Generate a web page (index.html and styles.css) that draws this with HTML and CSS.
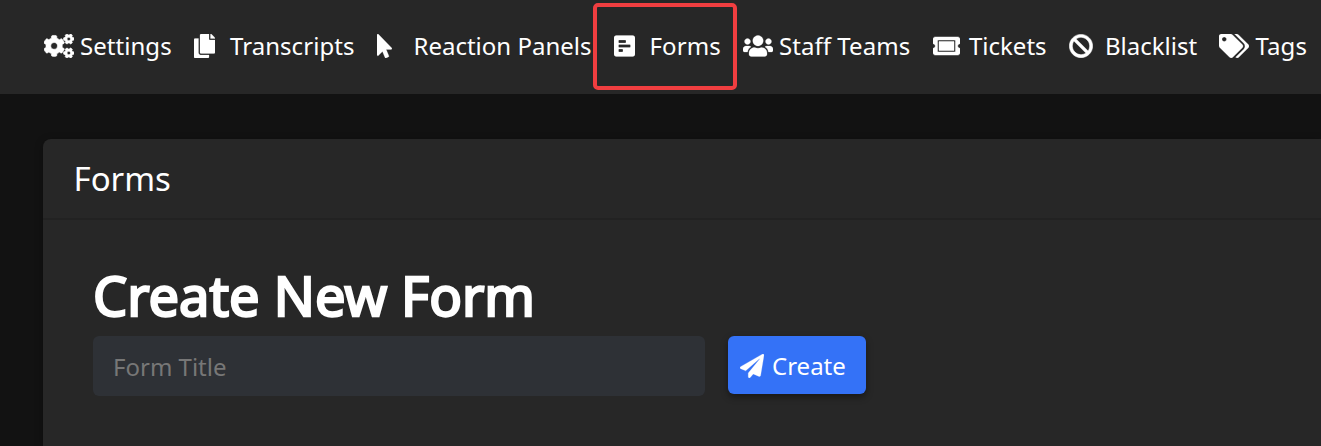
FILE: index.html
```html
<!DOCTYPE html>
<html lang="en">
<head>
<meta charset="utf-8">
<title>Forms</title>
<link rel="stylesheet" href="styles.css">
</head>
<body>
<nav class="navbar">
  <a class="nav-item settings"><svg class="icon" viewBox="0 0 640 512"><defs><path id="cog" d="M512.1 191l-8.2 14.3c-3 5.3-9.4 7.5-15.1 5.4-11.8-4.4-22.6-10.7-32.1-18.6-4.6-3.8-5.8-10.5-2.8-15.7l8.2-14.3c-6.9-8-12.3-17.3-15.9-27.4h-16.5c-6 0-11.2-4.3-12.2-10.3-2-12-2.1-24.6 0-37.1 1-6 6.2-10.4 12.2-10.4h16.5c3.6-10.1 9-19.4 15.9-27.4l-8.2-14.3c-3-5.2-1.9-11.9 2.8-15.7 9.5-7.9 20.4-14.2 32.1-18.6 5.7-2.1 12.1.1 15.1 5.4l8.2 14.3c10.5-1.9 21.2-1.9 31.7 0L552 6.3c3-5.3 9.4-7.5 15.1-5.4 11.8 4.4 22.6 10.7 32.1 18.6 4.6 3.8 5.8 10.5 2.8 15.7l-8.2 14.3c6.9 8 12.3 17.3 15.9 27.4h16.5c6 0 11.2 4.3 12.2 10.3 2 12 2.1 24.6 0 37.1-1 6-6.2 10.4-12.2 10.4h-16.5c-3.6 10.1-9 19.4-15.9 27.4l8.2 14.3c3 5.2 1.9 11.9-2.8 15.7-9.5 7.9-20.4 14.2-32.1 18.6-5.7 2.1-12.1-.1-15.1-5.4l-8.2-14.3c-10.4 1.9-21.2 1.9-31.7 0zm-10.5-58.8c38.5 29.6 82.4-14.3 52.8-52.8-38.5-29.7-82.4 14.3-52.8 52.8z"/></defs><use href="#cog"/><use href="#cog" transform="translate(0 300)"/><path d="M386.3 286.1l33.7 16.8c10.1 5.8 14.5 18.1 10.5 29.1-8.9 24.2-26.4 46.4-42.6 65.8-7.4 8.9-20.2 11.1-30.3 5.3l-29.1-16.8c-16 13.7-34.6 24.6-54.9 31.7v33.6c0 11.6-8.3 21.6-19.7 23.6-24.6 4.2-50.4 4.4-75.9 0-11.5-2-20-11.9-20-23.6V418c-20.3-7.2-38.9-18-54.9-31.7L74 403c-10 5.8-22.9 3.6-30.3-5.3-16.2-19.4-33.3-41.6-42.2-65.7-4-10.9.4-23.2 10.5-29.1l33.3-16.8c-3.9-20.9-3.9-42.4 0-63.4L12 205.8c-10.1-5.8-14.6-18.1-10.5-29 8.9-24.2 26-46.4 42.2-65.8 7.4-8.9 20.2-11.1 30.3-5.3l29.1 16.8c16-13.7 34.6-24.6 54.9-31.7V57.1c0-11.5 8.2-21.5 19.6-23.5 24.6-4.2 50.5-4.4 76-.1 11.5 2 20 11.9 20 23.6v33.6c20.3 7.2 38.9 18 54.9 31.7l29.1-16.8c10-5.8 22.9-3.6 30.3 5.3 16.2 19.4 33.2 41.6 42.1 65.8 4 10.9.1 23.2-10 29.1l-33.7 16.8c3.9 21 3.9 42.5 0 63.5zm-117.6 21.1c59.2-77-28.7-164.9-105.7-105.7-59.2 77 28.7 164.9 105.7 105.7z"/></svg><span>Settings</span></a>
  <a class="nav-item transcripts"><svg class="icon" viewBox="0 0 448 512"><path d="M320 448v40c0 13.255-10.745 24-24 24H24c-13.255 0-24-10.745-24-24V120c0-13.255 10.745-24 24-24h72v296c0 30.879 25.121 56 56 56h168zm0-344V0H152c-13.255 0-24 10.745-24 24v368c0 13.255 10.745 24 24 24h272c13.255 0 24-10.745 24-24V128H344c-13.2 0-24-10.8-24-24zm120.971-31.029L375.029 7.029A24 24 0 0 0 358.059 0H352v96h96v-6.059a24 24 0 0 0-7.029-16.97z"/></svg><span>Transcripts</span></a>
  <a class="nav-item panels"><svg class="icon" viewBox="0 0 320 512"><path d="M302.189 329.126H196.105l55.831 135.993c3.889 9.428-.555 19.999-9.444 23.999l-49.165 21.427c-9.165 4-19.443-.571-23.332-9.714l-53.053-129.136-86.664 89.138C18.729 472.71 0 463.554 0 447.977V18.299C0 1.899 19.921-6.096 30.277 5.443l284.412 292.542c11.472 11.179 3.007 31.141-12.5 31.141z"/></svg><span>Reaction Panels</span></a>
  <a class="nav-item forms active"><svg class="icon" viewBox="0 0 448 512"><path d="M448 432V80c0-26.5-21.5-48-48-48H48C21.5 32 0 53.5 0 80v352c0 26.5 21.5 48 48 48h352c26.5 0 48-21.5 48-48zM112 192c-8.84 0-16-7.16-16-16v-32c0-8.84 7.16-16 16-16h128c8.84 0 16 7.16 16 16v32c0 8.84-7.16 16-16 16H112zm0 96c-8.84 0-16-7.16-16-16v-32c0-8.84 7.16-16 16-16h224c8.84 0 16 7.16 16 16v32c0 8.84-7.16 16-16 16H112zm0 96c-8.84 0-16-7.16-16-16v-32c0-8.84 7.16-16 16-16h64c8.84 0 16 7.16 16 16v32c0 8.84-7.16 16-16 16h-64z"/></svg><span>Forms</span></a>
  <a class="nav-item teams"><svg class="icon" viewBox="0 0 640 512"><path d="M96 224c35.3 0 64-28.7 64-64s-28.7-64-64-64-64 28.7-64 64 28.7 64 64 64zm448 0c35.3 0 64-28.7 64-64s-28.7-64-64-64-64 28.7-64 64 28.7 64 64 64zm32 32h-64c-17.6 0-33.5 7.1-45.1 18.6 40.3 22.1 68.9 62 75.1 109.4h66c17.7 0 32-14.3 32-32v-32c0-35.3-28.7-64-64-64zm-256 0c61.9 0 112-50.1 112-112S381.9 32 320 32 208 82.1 208 144s50.1 112 112 112zm76.8 32h-8.3c-20.8 10-43.9 16-68.5 16s-47.6-6-68.5-16h-8.3C179.6 288 128 339.6 128 403.2V432c0 26.5 21.5 48 48 48h288c26.5 0 48-21.5 48-48v-28.8c0-63.6-51.6-115.2-115.2-115.2zm-223.7-13.4C161.5 263.1 145.6 256 128 256H64c-35.3 0-64 28.7-64 64v32c0 17.7 14.3 32 32 32h65.9c6.3-47.4 34.9-87.3 75.2-109.4z"/></svg><span>Staff Teams</span></a>
  <a class="nav-item tickets"><svg class="icon" viewBox="0 0 576 512"><path d="M128 160h320v192H128V160zm400 96c0 26.51 21.49 48 48 48v96c0 26.51-21.49 48-48 48H48c-26.51 0-48-21.49-48-48v-96c26.51 0 48-21.49 48-48s-21.49-48-48-48v-96c0-26.51 21.49-48 48-48h480c26.51 0 48 21.49 48 48v96c-26.51 0-48 21.49-48 48zm-48-104c0-13.255-10.745-24-24-24H120c-13.255 0-24 10.745-24 24v208c0 13.255 10.745 24 24 24h336c13.255 0 24-10.745 24-24V152z"/></svg><span>Tickets</span></a>
  <a class="nav-item blacklist"><svg class="icon" viewBox="0 0 512 512"><path d="M256 8C119.034 8 8 119.033 8 256s111.034 248 248 248 248-111.034 248-248S392.967 8 256 8zm130.108 117.892c65.448 65.448 70 165.481 20.677 235.637L150.47 105.216c70.204-49.356 170.226-44.735 235.638 20.676zM125.892 386.108c-65.448-65.448-70-165.481-20.677-235.637L361.53 406.784c-70.203 49.356-170.226 44.736-235.638-20.676z"/></svg><span>Blacklist</span></a>
  <a class="nav-item tags"><svg class="icon" viewBox="0 0 640 512"><path d="M497.941 225.941L286.059 14.059A48 48 0 0 0 252.118 0H48C21.49 0 0 21.49 0 48v204.118a48 48 0 0 0 14.059 33.941l211.882 211.882c18.744 18.745 49.136 18.746 67.882 0l204.118-204.118c18.745-18.745 18.745-49.137 0-67.882zM112 160c-26.51 0-48-21.49-48-48s21.49-48 48-48 48 21.49 48 48-21.49 48-48 48zm513.941 133.823L421.823 497.941c-18.745 18.745-49.137 18.745-67.882 0l-.36-.36L527.64 323.522c16.999-16.999 26.36-39.6 26.36-63.64s-9.362-46.641-26.36-63.64L331.397 0h48.721a48 48 0 0 1 33.941 14.059l211.882 211.882c18.745 18.745 18.745 49.137 0 67.882z"/></svg><span>Tags</span></a>
</nav>
<main class="content">
  <section class="card">
    <header class="card-header"><h4 class="card-title">Forms</h4></header>
    <div class="card-body">
      <h2 class="heading">Create New Form</h2>
      <form class="form-row">
        <input class="field" type="text" placeholder="Form Title">
        <button class="create" type="button"><svg class="icon" viewBox="0 0 512 512"><path d="M476 3.2L12.5 270.6c-18.1 10.4-15.8 35.6 2.2 43.2L121 358.4l287.3-253.2c5.5-4.9 13.3 2.6 8.6 8.3L176 407v80.5c0 23.6 28.5 32.9 42.5 15.8L282 426l124.6 52.2c14.2 6 30.4-2.9 33-18.2l72-432C515 7.8 493.3-6.8 476 3.2z"/></svg><span>Create</span></button>
      </form>
    </div>
  </section>
</main>
</body>
</html>
```
FILE: styles.css
```css
* { box-sizing: border-box; }
body {
  margin: 0;
  background: #121212;
  color: #fff;
  font: 24px/36px "Noto Sans", sans-serif;
}
.navbar {
  display: flex;
  align-items: flex-start;
  height: 94px;
  padding: 3px 0 0 43.5px;
  background: #272727;
}
.nav-item {
  display: flex;
  flex: none;
  align-items: center;
  height: 86px;
  white-space: nowrap;
}
.icon {
  height: 24px;
  flex: none;
  fill: currentColor;
  stroke: currentColor;
  stroke-width: 5;
}
.settings { width: 150px; gap: 6.5px; letter-spacing: .05px; }
.settings .icon { stroke-width: 14; }
.transcripts { width: 183.5px; gap: 15.5px; letter-spacing: .05px; }
.panels { width: 216px; gap: 21.5px; }
.forms { width: 144px; gap: 15px; padding-left: 16.5px; letter-spacing: .1px; }
.forms.active {
  height: 87px;
  padding-bottom: 1px;
  border: 4px solid #f03e40;
  border-radius: 5px;
}
.teams { width: 196px; padding-left: 6px; gap: 6px; letter-spacing: .05px; }
.tickets { width: 136px; gap: 9px; }
.tickets .icon { stroke-width: 10; }
.blacklist { width: 150px; gap: 12px; }
.blacklist .icon { stroke-width: 12; }
.tags { gap: 6.5px; letter-spacing: .1px; }
.content { padding: 45px 0 0 43px; }
.card {
  height: 307px;
  background: #272727;
  border-radius: 8px 0 0 0;
  box-shadow: 0 2px 8px rgba(0, 0, 0, .3);
}
.card-header {
  height: 81px;
  padding: 18px 30.5px 17px;
  border-bottom: 2px solid #222;
}
.card-title { margin: 0; font-size: 33px; line-height: 44px; font-weight: 400; }
.card-body { padding: 36px 50px 0; }
.heading {
  margin: 0;
  height: 80px;
  font-size: 54.2px;
  line-height: 78px;
  font-weight: 400;
  -webkit-text-stroke: 2.4px #fff;
}
.form-row { display: flex; gap: 23px; align-items: flex-start; margin: 0; }
.field {
  width: 612px;
  height: 60px;
  padding: 1px 20px 0;
  border: 0;
  border-radius: 6px;
  background: #2e3136;
  color: #fff;
  font: inherit;
}
.field::placeholder { color: #777; }
.create {
  display: flex;
  align-items: center;
  gap: 8px;
  width: 138px;
  height: 58px;
  padding: 1px 12px 0;
  border: 0;
  border-radius: 6px;
  background: #3472f7;
  color: #fff;
  font: inherit;
  box-shadow: 0 3px 7px rgba(0, 0, 0, .4);
}
```
